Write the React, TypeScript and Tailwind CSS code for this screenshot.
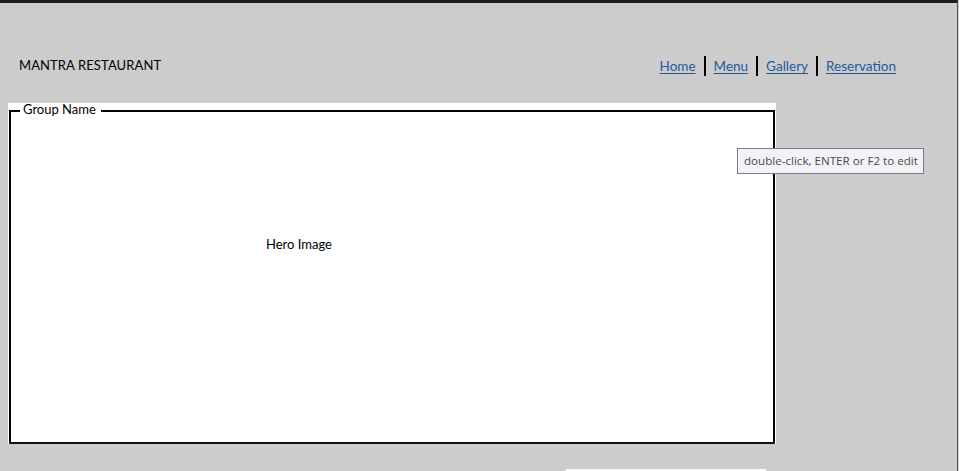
const links = ["Home", "Menu", "Gallery", "Reservation"];

function App() {
  return (
    <div className="relative w-[959px] h-[471px] overflow-hidden bg-[#cccccc] font-['Lato',sans-serif]">
      <div className="w-[958px] h-full border-t-[3px] border-r border-t-[#1c1c1c] border-r-[#555555]">
        {/* header */}
        <div className="flex items-center justify-between h-[100px] pl-[19px] pr-[61px] pt-[26px]">
          <div className="text-[13px] text-black tracking-[0.1px]">MANTRA RESTAURANT</div>
          <nav className="flex items-center">
            {links.map((l, i) => (
              <div key={l} className="flex items-center">
                {i > 0 && <span className="mx-[8px] w-[2px] h-[20px] bg-black" />}
                <a href="#" className="text-[13.5px] text-[#1e5a99] underline underline-offset-2">
                  {l}
                </a>
              </div>
            ))}
          </nav>
        </div>

        {/* hero group */}
        <div className="ml-[8px] w-[768px] h-[341px] bg-white px-[1px]">
          <fieldset className="h-full border-2 border-black border-b-[#111] rounded-[1px] m-0 p-0">
            <legend className="ml-[9px] pl-[3px] pr-[5px] text-[13px] leading-[16px] text-black -translate-y-[2px]">Group Name</legend>
            <div className="pl-[255px] pt-[116px] text-[13px] text-black">Hero Image</div>
          </fieldset>
        </div>

        <div className="ml-[566px] mt-[25px] w-[200px] h-[2px] bg-white" />
      </div>

      {/* tooltip */}
      <div className="absolute left-[737px] top-[148px] w-[187px] h-[26px] flex items-center pl-[6px] whitespace-nowrap bg-[#f3f3f7] border border-[#7b7b8e] text-[11.6px] text-[#4a4a4a] font-['Open_Sans',sans-serif]">
        double-click, ENTER or F2 to edit
      </div>
    </div>
  );
}

export default App;
